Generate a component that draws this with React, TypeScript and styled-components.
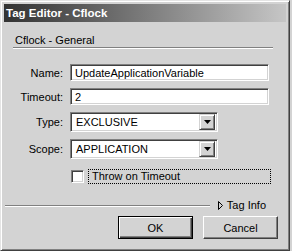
import { Fragment } from "react";
import styled, { createGlobalStyle } from "styled-components";

const GlobalStyle = createGlobalStyle`
  body {
    margin: 0;
    background: #d3d3d3;
    font-family: "Liberation Sans", Arial, sans-serif;
    font-size: 11px;
    color: #000;
  }
`;

const Window = styled.div`
  width: 290px;
  height: 251px;
  box-sizing: border-box;
  background: #d3d3d3;
  border: 1px solid;
  border-color: #e4e4e4 #404040 #404040 #e4e4e4;
  box-shadow: inset 1px 1px #fff, inset -1px -1px #808080;
  padding: 3px;
  display: flex;
  flex-direction: column;
`;

const TitleBar = styled.div`
  height: 18px;
  line-height: 18px;
  padding-left: 2px;
  background: linear-gradient(to right, #323232, #c6c6c6);
  color: #fff;
  font-weight: bold;
  font-size: 11.5px;
  white-space: nowrap;
`;

const Heading = styled.div`
  margin: 12px 0 0 11px;
  line-height: 13px;
`;

const Rule = styled.div<{ $left: number; $right: number }>`
  margin: 0 ${({ $right }) => $right}px 0 ${({ $left }) => $left}px;
  height: 0;
  border-top: 1px solid #808080;
  border-bottom: 1px solid #fff;
`;

const FormGrid = styled.div`
  margin-top: 15px;
  display: grid;
  grid-template-columns: 59px auto;
  column-gap: 7px;
  row-gap: 7px;
  align-items: center;
  justify-items: start;
`;

const Label = styled.label`
  justify-self: end;
`;

const sunken = `
  box-sizing: border-box;
  border: 1px solid;
  border-color: #808080 #fff #fff #808080;
  box-shadow: inset 1px 1px #404040, inset -1px -1px #d3d3d3;
  background: #fff;
`;

const TextField = styled.div`
  ${sunken}
  width: 199px;
  height: 17px;
  line-height: 13px;
  padding: 2px 4px;
  white-space: nowrap;
`;

const Select = styled.div`
  ${sunken}
  width: 148px;
  height: 20px;
  padding: 2px;
  display: flex;
  align-items: center;
  justify-content: space-between;
`;

const SelectValue = styled.span`
  padding-left: 3px;
  line-height: 14px;
`;

const ArrowButton = styled.div`
  box-sizing: border-box;
  width: 16px;
  height: 16px;
  background: #d3d3d3;
  border: 1px solid;
  border-color: #d3d3d3 #404040 #404040 #d3d3d3;
  box-shadow: inset 1px 1px #fff, inset -1px -1px #808080;
  display: flex;
  align-items: center;
  justify-content: center;
`;

const CheckRow = styled.div`
  margin-top: 3px;
  display: flex;
  align-items: center;
  gap: 4px;
  padding-left: 1px;
`;

const CheckBox = styled.div`
  ${sunken}
  width: 13px;
  height: 13px;
`;

const FocusLabel = styled.div`
  width: 183px;
  height: 15px;
  box-sizing: border-box;
  border: 1px dotted #000;
  padding-left: 3px;
  line-height: 13px;
`;

const Footer = styled.div`
  margin-top: 15px;
  display: flex;
  align-items: center;
  height: 13px;
  padding: 0 20px 0 1px;
`;

const FooterRule = styled(Rule)`
  flex: 1;
`;

const Disclosure = styled.div`
  margin-left: 8px;
  display: flex;
  align-items: center;
  gap: 4px;
  line-height: 13px;
`;

const Buttons = styled.div`
  margin-top: 4px;
  display: flex;
  justify-content: flex-end;
  gap: 10px;
  padding-right: 8px;
`;

const Button = styled.div<{ $default?: boolean }>`
  box-sizing: border-box;
  width: 75px;
  height: 23px;
  display: flex;
  align-items: center;
  justify-content: center;
  font-size: 11px;
  background: #d3d3d3;
  border: 1px solid;
  border-color: ${({ $default }) =>
    $default ? "#000" : "#fff #404040 #404040 #fff"};
  box-shadow: ${({ $default }) =>
    $default
      ? "inset 1px 1px #fff, inset -1px -1px #404040, inset -2px -2px #808080"
      : "inset -1px -1px #808080"};
`;

const fields = [
  { label: "Name:", value: "UpdateApplicationVariable" },
  { label: "Timeout:", value: "2" },
];

const selects = [
  { label: "Type:", value: "EXCLUSIVE" },
  { label: "Scope:", value: "APPLICATION" },
];

export default function App() {
  return (
    <>
      <GlobalStyle />
      <Window>
        <TitleBar>Tag Editor - Cflock</TitleBar>
        <Heading>Cflock - General</Heading>
        <Rule $left={9} $right={13} />
        <FormGrid>
          {fields.map((f) => (
            <Fragment key={f.label}>
              <Label>{f.label}</Label>
              <TextField>{f.value}</TextField>
            </Fragment>
          ))}
          {selects.map((s) => (
            <Fragment key={s.label}>
              <Label>{s.label}</Label>
              <Select>
                <SelectValue>{s.value}</SelectValue>
                <ArrowButton>
                  <svg width="7" height="4" viewBox="0 0 7 4">
                    <polygon points="0,0 7,0 3.5,4" fill="#000" />
                  </svg>
                </ArrowButton>
              </Select>
            </Fragment>
          ))}
          <span />
          <CheckRow>
            <CheckBox />
            <FocusLabel>Throw on Timeout</FocusLabel>
          </CheckRow>
        </FormGrid>
        <Footer>
          <FooterRule $left={0} $right={0} />
          <Disclosure>
            <svg width="5" height="9" viewBox="0 0 5 9">
              <polygon
                points="0.5,0.5 4.5,4.5 0.5,8.5"
                fill="none"
                stroke="#000"
                strokeWidth="1"
              />
            </svg>
            Tag Info
          </Disclosure>
        </Footer>
        <Buttons>
          <Button $default>OK</Button>
          <Button>Cancel</Button>
        </Buttons>
      </Window>
    </>
  );
}
